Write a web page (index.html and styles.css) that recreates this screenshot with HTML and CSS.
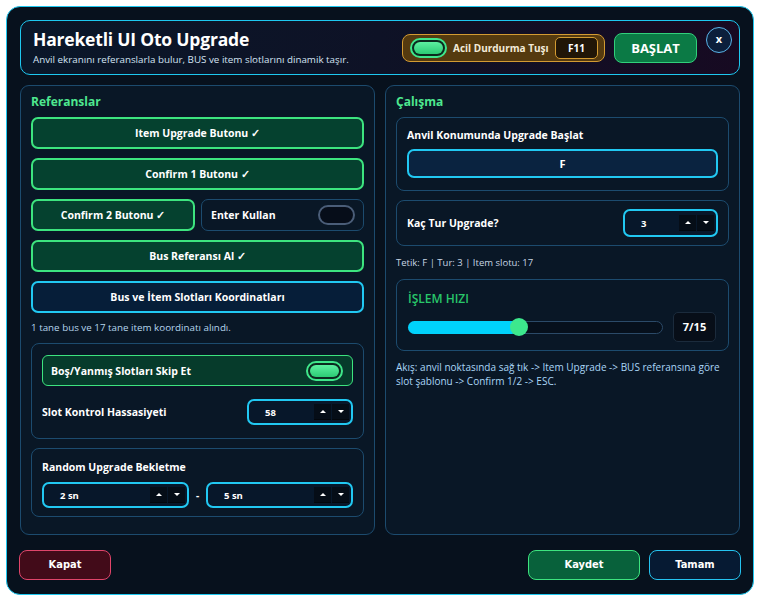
FILE: index.html
```html
<!doctype html>
<html>
<head>
<meta charset="utf-8">
<title>Hareketli UI Oto Upgrade</title>
<link rel="stylesheet" href="styles.css">
</head>
<body>
<div class="win">
  <div class="head">
    <div class="head-text">
      <div class="head-title">Hareketli UI Oto Upgrade</div>
      <div class="head-sub">Anvil ekranını referanslarla bulur, BUS ve item slotlarını dinamik taşır.</div>
    </div>
    <div class="stop">
      <span class="toggle on"><i></i></span>
      <span class="stop-label">Acil Durdurma Tuşı</span>
      <span class="stop-key">F11</span>
    </div>
    <a class="start-btn" href="javascript:">BAŞLAT</a>
    <a class="close-btn" href="javascript:">x</a>
  </div>

  <div class="cols">
    <div class="panel">
      <div class="panel-title">Referanslar</div>
      <a class="btn green" href="javascript:">Item Upgrade Butonu ✓</a>
      <a class="btn green" href="javascript:">Confirm 1 Butonu ✓</a>
      <div class="pair">
        <a class="btn green" href="javascript:">Confirm 2 Butonu ✓</a>
        <div class="enter-box">
          <span>Enter Kullan</span>
          <span class="toggle off"><i></i></span>
        </div>
      </div>
      <a class="btn green" href="javascript:">Bus Referansı Al ✓</a>
      <a class="btn cyan" href="javascript:">Bus ve İtem Slotları Koordinatları</a>
      <div class="note">1 tane bus ve 17 tane item koordinatı alındı.</div>

      <div class="sub sub-skip">
        <div class="skip-row">
          <span>Boş/Yanmış Slotları Skip Et</span>
          <span class="toggle on"><i></i></span>
        </div>
        <div class="row">
          <span class="label">Slot Kontrol Hassasiyeti</span>
          <div class="spin w106"><span class="spin-val">58</span><span class="arr up"></span><span class="arr down"></span></div>
        </div>
      </div>

      <div class="sub sub-wait">
        <div class="label">Random Upgrade Bekletme</div>
        <div class="range">
          <div class="spin grow"><span class="spin-val">2 sn</span><span class="arr up"></span><span class="arr down"></span></div>
          <span class="dash">-</span>
          <div class="spin grow"><span class="spin-val">5 sn</span><span class="arr up"></span><span class="arr down"></span></div>
        </div>
      </div>
    </div>

    <div class="panel">
      <div class="panel-title">Çalışma</div>
      <div class="sub sub-anvil">
        <div class="label">Anvil Konumunda Upgrade Başlat</div>
        <a class="key-btn" href="javascript:">F</a>
      </div>
      <div class="sub sub-tur">
        <span class="label">Kaç Tur Upgrade?</span>
        <div class="spin w95"><span class="spin-val">3</span><span class="arr up"></span><span class="arr down"></span></div>
      </div>
      <div class="status">Tetik: F | Tur: 3 | Item slotu: 17</div>
      <div class="sub sub-speed">
        <div class="speed-title">İŞLEM HIZI</div>
        <div class="speed-row">
          <div class="track"><div class="fill" style="width: 110px"></div><span class="thumb" style="left: 110px"></span></div>
          <span class="speed-val">7/15</span>
        </div>
      </div>
      <div class="flow">Akış: anvil noktasında sağ tık -&gt; Item Upgrade -&gt; BUS referansına göre slot şablonu -&gt; Confirm 1/2 -&gt; ESC.</div>
    </div>
  </div>

  <div class="foot">
    <a class="fbtn red" href="javascript:">Kapat</a>
    <a class="fbtn save" href="javascript:">Kaydet</a>
    <a class="fbtn ok" href="javascript:">Tamam</a>
  </div>
</div>
</body>
</html>
```

FILE: styles.css
```css
body { margin: 0; background: #fff; font-family: "Open Sans", "Noto Sans", sans-serif; color: #fff; }
a { text-decoration: none; color: #fff; }
.win { margin: 6px; width: 748px; height: 589px; box-sizing: border-box; padding: 13px; border: 1px solid #1ec8f0; border-radius: 14px; background: #07111d; display: flex; flex-direction: column; }

/* header */
.head { height: 55px; box-sizing: border-box; display: flex; align-items: center; padding: 0 7px 0 12px; border: 1px solid #1ec8f0; border-radius: 10px; background: linear-gradient(90deg, #0a1729 0%, #0e1226 50%, #170a22 100%); }
.head-text { flex: 1; }
.head-title { font-size: 17.5px; font-weight: 700; line-height: 22px; letter-spacing: -0.2px; }
.head-sub { font-size: 9.8px; line-height: 14px; margin-top: 3px; color: #d4e4f4; }
.stop { width: 203px; height: 28px; box-sizing: border-box; display: flex; align-items: center; padding: 0 6px 0 7px; border: 1px solid #d39b32; border-radius: 8px; background: #553a0f; }
.stop-label { flex: 1; font-size: 10px; font-weight: 700; margin-left: 6px; color: #f3ead8; }
.stop-key { width: 43px; height: 22px; box-sizing: border-box; border: 1px solid #d39b32; border-radius: 5px; background: #211607; font-size: 10px; font-weight: 700; text-align: center; line-height: 20px; }
.start-btn { width: 83px; height: 30px; box-sizing: border-box; margin-left: 9px; border: 1px solid #31d07b; border-radius: 8px; background: #0b7a45; font-size: 13px; font-weight: 700; text-align: center; line-height: 28px; }
.close-btn { width: 26px; height: 26px; box-sizing: border-box; margin-left: 9px; align-self: flex-start; margin-top: 6px; border: 1px solid #5ab4e8; border-radius: 50%; background: #0c1f3c; font-size: 11px; font-weight: 700; text-align: center; line-height: 22px; }

/* toggles */
.toggle { width: 37px; height: 20px; box-sizing: border-box; border-radius: 10px; padding: 2px; display: inline-block; }
.toggle i { display: block; height: 100%; border-radius: 8px; }
.toggle.on { border: 2px solid #3fe68a; background: #0b2a1f; }
.toggle.on i { background: linear-gradient(#5cf0a0, #2ccb74); }
.toggle.off { border: 2px solid #4a5d78; background: #060d19; }

/* columns */
.cols { display: grid; grid-template-columns: 1fr 1fr; gap: 10px; margin-top: 10px; height: 450px; }
.panel { box-sizing: border-box; border: 1px solid #1c4b6e; border-radius: 9px; background: #091726; padding: 9px 10px; display: flex; flex-direction: column; gap: 9px; }
.panel-title { font-size: 12px; font-weight: 700; color: #4ee88f; line-height: 14px; margin-bottom: -1px; }
.btn { height: 32px; box-sizing: border-box; display: flex; align-items: center; justify-content: center; border-radius: 7px; font-size: 10.5px; font-weight: 700; }
.btn.green { border: 2px solid #3de47f; background: #05412f; }
.btn.cyan { border: 2px solid #21c8f2; background: #061e39; }
.pair { display: flex; gap: 6px; }
.pair .btn { width: 164px; }
.enter-box { flex: 1; height: 32px; box-sizing: border-box; display: flex; align-items: center; justify-content: space-between; padding: 0 8px 0 9px; border: 1px solid #1c4b6e; border-radius: 7px; font-size: 10.5px; font-weight: 700; }
.note { font-size: 9.8px; line-height: 12px; color: #b6d6ee; }

.sub { box-sizing: border-box; border: 1px solid #1c4b6e; border-radius: 8px; }
.sub-skip { padding: 11px 10px 13px; display: flex; flex-direction: column; gap: 13px; }
.skip-row { height: 31px; box-sizing: border-box; display: flex; align-items: center; justify-content: space-between; padding: 0 9px 0 8px; border: 1px solid #3de47f; border-radius: 6px; background: #063b2b; font-size: 10.5px; font-weight: 700; }
.row { display: flex; align-items: center; justify-content: space-between; }
.label { font-size: 10.5px; font-weight: 700; }
.sub-wait { padding: 11px 10px 8px; }
.range { display: flex; align-items: center; margin-top: 8px; }
.dash { width: 17px; text-align: center; font-size: 10px; font-weight: 700; }

/* spin boxes */
.spin { height: 26px; box-sizing: border-box; display: flex; align-items: center; padding: 0 2px 0 12px; border: 2px solid #21c8f2; border-radius: 7px; background: #07172a; }
.spin.grow { flex: 1; }
.w106 { width: 106px; }
.w95 { width: 95px; height: 28px; }
.spin-val { flex: 1; font-size: 9.5px; font-weight: 700; padding-left: 4px; }
.arr { width: 17px; height: 15px; background: #050d17; border-bottom: 1px solid #02070d; position: relative; margin-left: 1px; }
.arr::after { content: ""; position: absolute; left: 6px; top: 6px; border-left: 3px solid transparent; border-right: 3px solid transparent; }
.arr.up::after { border-bottom: 3px solid #fff; }
.arr.down::after { border-top: 3px solid #fff; }

/* right column */
.sub-anvil { padding: 10px 10px 12px; }
.key-btn { display: block; height: 29px; box-sizing: border-box; margin-top: 7px; border: 2px solid #21c8f2; border-radius: 7px; background: #0a2340; text-align: center; line-height: 25px; font-size: 11px; font-weight: 700; }
.sub-tur { height: 46px; display: flex; align-items: center; justify-content: space-between; padding: 0 10px; }
.status { font-size: 9.5px; line-height: 12px; color: #c7d5e3; margin-top: 2px; }
.sub-speed { height: 72px; padding: 11px 12px 0 11px; margin-top: 1px; }
.speed-title { font-size: 12px; font-weight: 600; color: #28c76a; line-height: 16px; }
.speed-row { display: flex; align-items: center; gap: 10px; margin-top: 5px; }
.track { flex: 1; height: 13px; box-sizing: border-box; border: 1px solid #2b4a68; border-radius: 7px; background: #06101c; position: relative; }
.fill { height: 13px; margin: -1px; border-radius: 7px; background: #00d2fb; }
.thumb { position: absolute; top: -4px; width: 18px; height: 18px; margin-left: -9px; border-radius: 50%; background: #3de88d; }
.speed-val { width: 43px; height: 30px; box-sizing: border-box; border: 1px solid #1b2b3c; border-radius: 5px; background: #070e18; text-align: center; line-height: 28px; font-size: 11px; font-weight: 700; }
.flow { font-size: 10px; line-height: 14px; color: #a9d6f6; margin-top: 0; }

/* footer */
.foot { display: flex; margin-top: 15px; gap: 9px; }
.fbtn { height: 30px; box-sizing: border-box; border-radius: 8px; text-align: center; line-height: 28px; font-family: "DejaVu Sans Condensed", "DejaVu Sans", sans-serif; font-stretch: condensed; font-size: 11px; font-weight: 700; }
.fbtn.red { width: 92px; margin-left: -1px; margin-right: auto; border: 1px solid #e0456a; background: #420b19; }
.fbtn.save { width: 112px; border: 1px solid #3de47f; background: #08613b; }
.fbtn.ok { width: 92px; margin-right: -1px; border: 1px solid #25c3f0; background: #061a33; }
```
